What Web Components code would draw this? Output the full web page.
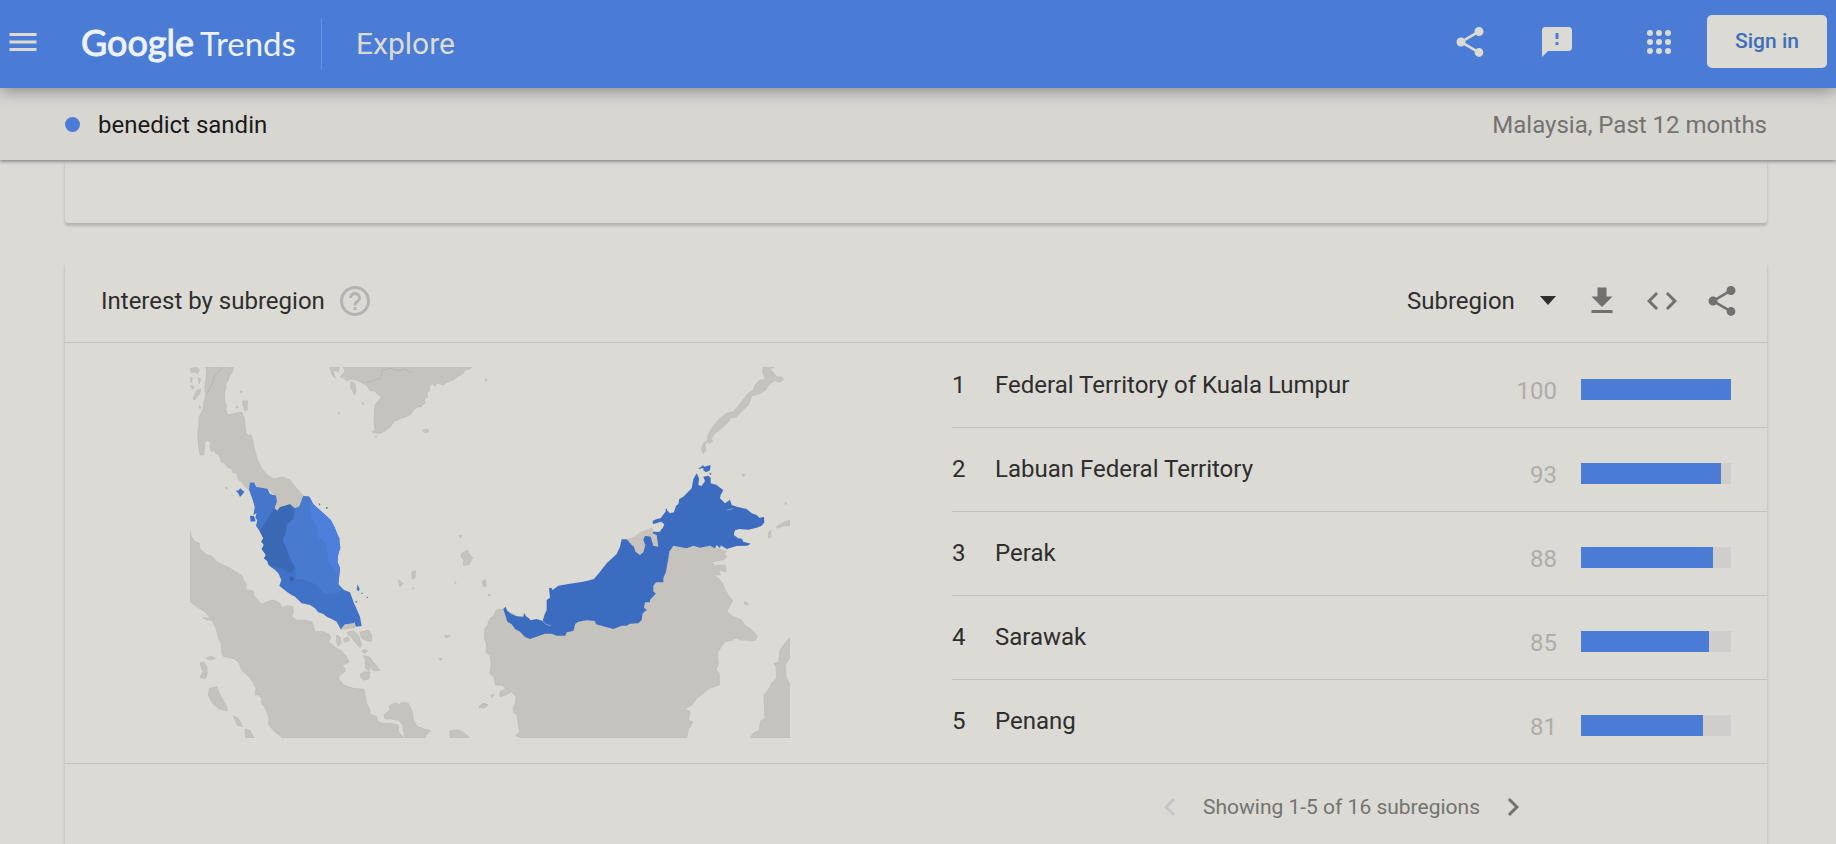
<!DOCTYPE html>
<html lang="en">
<head>
<meta charset="utf-8">
<title>benedict sandin - Explore - Google Trends</title>
<meta name="viewport" content="width=device-width, initial-scale=1">
<style>
  :root {
    --blue: #4a7cd5;
    --page: #dbdad5;
    --bar: #d7d6d1;
    --line: #c0bfbb;
    --text: #2e2e2d;
    --muted: #747370;
    --faint: #aeada9;
  }
  html, body { margin: 0; height: 100%; }
  body { background: var(--page); color: var(--text); font: 24px/36px Roboto, "Liberation Sans", sans-serif; }
</style>
</head>
<body>
<trends-app></trends-app>

<script>
const define = (name, html, setup) => {
  const template = document.createElement('template');
  template.innerHTML = html;
  customElements.define(name, class extends HTMLElement {
    connectedCallback() {
      if (this.shadowRoot) return;
      this.attachShadow({ mode: 'open' }).append(template.content.cloneNode(true));
      if (setup) setup(this, this.shadowRoot);
    }
  });
};

const ICONS = {
  menu: '<path d="M3 18h18v-2H3v2zm0-5h18v-2H3v2zm0-7v2h18V6H3z"/>',
  share: '<path d="M18 16.08c-.76 0-1.44.3-1.96.77L8.91 12.7c.05-.23.09-.46.09-.7s-.04-.47-.09-.7l7.05-4.11c.54.5 1.25.81 2.04.81 1.66 0 3-1.34 3-3s-1.34-3-3-3-3 1.34-3 3c0 .24.04.47.09.7L8.04 9.81C7.5 9.31 6.79 9 6 9c-1.66 0-3 1.34-3 3s1.34 3 3 3c.79 0 1.5-.31 2.04-.81l7.12 4.16c-.05.21-.08.43-.08.65 0 1.61 1.31 2.92 2.92 2.92s2.92-1.31 2.92-2.92-1.31-2.92-2.92-2.92z"/>',
  feedback: '<path d="M20 2H4c-1.1 0-1.99.9-1.99 2L2 22l4-4h14c1.100 0 2-.9 2-2V4c0-1.100-.9-2-2-2zm-7 12h-2v-2h2v2zm0-4h-2V6h2v4z"/>',
  apps: '<g><circle cx="6" cy="6" r="2"/><circle cx="12" cy="6" r="2"/><circle cx="18" cy="6" r="2"/><circle cx="6" cy="12" r="2"/><circle cx="12" cy="12" r="2"/><circle cx="18" cy="12" r="2"/><circle cx="6" cy="18" r="2"/><circle cx="12" cy="18" r="2"/><circle cx="18" cy="18" r="2"/></g>',
  help: '<path d="M11 18h2v-2h-2v2zm1-16C6.480 2 2 6.480 2 12s4.480 10 10 10 10-4.480 10-10S17.520 2 12 2zm0 18c-4.410 0-8-3.590-8-8s3.590-8 8-8 8 3.590 8 8-3.590 8-8 8zm0-14c-2.210 0-4 1.790-4 4h2c0-1.100.9-2 2-2s2 .9 2 2c0 2-3 1.750-3 5h2c0-2.250 3-2.500 3-5 0-2.210-1.790-4-4-4z"/>',
  download: '<path d="M19 9h-4V3H9v6H5l7 7 7-7zM5 18v2h14v-2H5z"/>',
  code: '<path d="M9.400 16.600L4.800 12l4.600-4.600L8 6l-6 6 6 6 1.400-1.400zm5.200 0l4.600-4.600-4.600-4.600L16 6l6 6-6 6-1.400-1.400z"/>',
  prev: '<path d="M15.410 7.410L14 6l-6 6 6 6 1.410-1.410L10.830 12z"/>',
  next: '<path d="M10 6L8.590 7.410 13.170 12l-4.580 4.590L10 18l6-6z"/>'
};

define('trends-icon', `
  <style>
    :host { display: block; width: 36px; height: 36px; flex: none; }
    svg { display: block; width: 100%; height: 100%; fill: currentColor; }
  </style>
  <svg viewBox="0 0 24 24" aria-hidden="true"></svg>`,
  (host, root) => { root.querySelector('svg').innerHTML = ICONS[host.getAttribute('name')]; });

define('icon-button', `
  <style>
    :host { display: block; flex: none; }
    button { display: block; padding: 0; border: 0; background: none; color: inherit; cursor: pointer; }
    button:disabled { cursor: default; }
  </style>
  <button type="button"></button>`,
  (host, root) => {
    const button = root.querySelector('button');
    button.setAttribute('aria-label', host.getAttribute('label'));
    button.disabled = host.hasAttribute('disabled');
    const icon = document.createElement('trends-icon');
    icon.setAttribute('name', host.getAttribute('icon'));
    button.replaceChildren(icon);
  });

define('trends-header', `
  <style>
    :host { display: flex; align-items: center; height: 88px; box-sizing: border-box; padding: 0 9px 4px 5px;
      background: var(--blue); color: var(--page); position: relative; z-index: 3;
      box-shadow: 0 2px 16px rgba(0,0,0,.4); }
    .logo { display: flex; align-items: baseline; gap: 6px; width: 216px; margin-left: 40px; color: #edf1f8;
      font: 33px/48px Lato, "Liberation Sans", sans-serif; text-decoration: none; white-space: nowrap; }
    .logo b { font-size: 36px; font-weight: 400; -webkit-text-stroke: 1px; }
    .rule { width: 1px; height: 50px; margin: 4px 34px 0 24px; background: #6391e3; }
    h1 { margin: 4px 0 0; font-size: 30px; line-height: 40px; font-weight: 400; }
    .space { flex: 1; }
    nav { display: flex; align-items: center; }
    .feedback { margin-left: 51px; }
    .apps { margin: 0 30px 0 66px; }
    .signin { width: 120px; height: 53px; box-sizing: border-box; margin-top: -2px; display: grid; place-items: center;
      background: var(--page); color: #3f6fb8; border-radius: 5px; font-size: 21px; font-weight: 500; text-decoration: none; }
  </style>
  <icon-button icon="menu" label="Main menu"></icon-button>
  <a class="logo" href="#home"><b>Google</b><span>Trends</span></a>
  <div class="rule"></div>
  <h1>Explore</h1>
  <div class="space"></div>
  <nav>
    <icon-button icon="share" label="Share"></icon-button>
    <icon-button class="feedback" icon="feedback" label="Send feedback"></icon-button>
    <icon-button class="apps" icon="apps" label="Google apps"></icon-button>
    <a class="signin" href="#signin">Sign in</a>
  </nav>`);

define('query-bar', `
  <style>
    :host { display: flex; align-items: center; height: 72px; padding: 0 69px 0 65px; background: var(--bar);
      position: relative; z-index: 2; box-shadow: 0 1px 4px rgba(0,0,0,.5); }
    .dot { width: 15px; height: 15px; border-radius: 50%; background: var(--blue); margin-right: 18px; }
    .term, .scope { padding-top: 2px; }
    .term { flex: 1; color: #1a1a1a; }
    .scope { color: var(--muted); }
  </style>
  <span class="dot"></span><span class="term">benedict sandin</span>
  <span class="scope">Malaysia, Past 12 months</span>`);

define('trends-card', `
  <style>
    :host { display: block; border-radius: 3px; background: var(--page);
      box-shadow: 0 3px 3px rgba(0,0,0,.13), 0 2px 3px rgba(0,0,0,.06); }
  </style>
  <slot></slot>`);

define('region-map', `
  <style>
    :host { display: block; width: 600px; max-width: 100%; }
    svg { display: block; width: 100%; height: auto; }
    .land { fill: #c6c3be; stroke: #bdbab5; stroke-width: 2; }
    .edge { fill: none; stroke: #b9b6b1; stroke-width: 3; }
  </style>
  <svg viewBox="190 367 600 371" role="img" aria-label="Interest by subregion map of Malaysia">
    <g transform="translate(180 355) scale(.33333)" stroke-linejoin="round">
      <g class="land">
        <path d="M75 36H160L158 50 148 64 145 76 137 88 139 96 134 110 133 140 140 152 137 165 143 180 153 178 165 175 185 172 193 190 196 220 198 235 206 242 212 238 218 256 222 275 228 300 232 315 245 340 262 360 275 368 285 372 305 366 318 369 330 375 340 388 350 400 370 423 358 455 345 460 330 448 305 458 290 470 280 460 290 440 285 420 265 402 240 400 222 383 210 385 208 405 195 395 184 380 176 375 170 355 158 352 155 340 144 338 135 325 124 320 117 300 105 294 105 284 95 290 90 278 92 262 80 255 74 266 72 300 60 300 55 270 53 235 57 212 57 188 70 160 72 140 78 120 74 96 78 78 80 45Z"/>
        <path d="M30 40l20-2 8 6-6 14-8-8-10 3zM30 68l7 1-3 14zM54 68l8 4-4 14zM32 92l10 3-4 8zM48 108l14-6-3 14-14 18-6-2zM58 152l5 4-3 6zM190 137l13 1-2 18 3 6-10 6-3-14-4-4zM181 107l6 2-4 5zM170 152l4 6-4 2zM136 396l7 3-5 4z"/>
        <path d="M448 36H478L475 50 468 46 460 50 466 70 456 60 452 46Z"/>
        <path d="M490 36H875L868 42 856 44 850 55 834 64 820 75 800 82 790 90 768 84 768 94 758 88 750 90 748 108 740 115 743 126 733 132 735 144 722 156 710 156 700 166 690 180 664 190 640 200 634 212 625 220 612 230 600 235 576 232 585 226 582 204 585 150 605 125 590 115 583 107 570 107 560 90 545 84 530 75 512 72 500 78 492 70 480 66 495 50Z"/>
        <path d="M512 80l13 6 3 20-5 14-6-14-5-8zM728 226l14-4 4 8-10 3zM916 71l6 4-4 5zM585 244l6 1-4 3zM476 172l4 3-4 2zM547 142l5 4-4 3z"/>
        <path d="M30 530L34 544 42 557 58 565 60 582 80 600 95 603 110 620 130 630 148 638 165 650 185 662 188 672 197 685 198 704 220 708 220 720 232 735 246 748 262 740 280 735 300 745 306 758 315 755 322 752 338 755 340 770 335 785 352 797 375 795 395 800 400 812 405 830 430 830 448 838 452 850 445 860 458 870 470 880 485 888 500 905 507 922 485 932 495 940 495 950 480 960 475 970 490 990 520 1000 552 1003 556 1025 560 1045 570 1065 570 1078 590 1085 592 1098 610 1106 630 1105 655 1110 655 1130 672 1150H310L290 1135 275 1120 265 1108 268 1090 262 1078 258 1062 245 1045 245 1030 238 1020 225 1020 228 1000 220 985 210 968 185 945 178 925 165 912 130 904 125 890 125 870 115 848 110 825 98 800 84 780 75 770 50 755 30 740Z"/>
        <path d="M612 1080L630 1065 628 1052 645 1044 658 1048 665 1042 685 1045 697 1070 700 1095 712 1115 752 1128 740 1138 735 1150H675L668 1110 656 1096 636 1092 615 1092ZM810 1127L835 1124 860 1140 868 1150H810ZM88 1000L110 995 120 1020 140 1055 142 1068 118 1062 98 1046 85 1020ZM160 1083l14 6 14 26-16-4zM195 1122l15 4 12 24h-25zM78 910l14-6 14 5-12 6zM60 925l12-4 8 14 2 18-5 18-17-3 9-18zM70 788l20 2 12-2-2 8-20-2z"/>
        <path d="M482 823L500 807 525 808 525 818ZM500 832L520 828 535 840 545 870 540 878 526 862 512 845ZM540 832L565 825 575 840 575 858 560 858 545 850ZM470 840l10 6 3 18-8 10-6-15zM490 852l14-6 6 10-16 6zM545 888l10-6 8 6-10 8zM550 902l18 4 32 40-18 2-20-20zM540 958l14-8 16 2-4 20-14 4-10-10zM555 920l14 12-2 18-10-10z"/>
        <path d="M845 595L862 585 868 598 878 608 868 628 850 632 852 615 843 606ZM655 675l15 10-10 10zM696 650l11-3-2 22-9 3zM906 680l8-6 3 16-7 4zM825 680l4 3-4 3zM698 698l5 2-4 3zM793 840l18 3-13 5zM778 910l8 2-6 4zM897 1057l12-12 14 3-12 10zM838 540l8 2-6 8zM925 798l20 6v90l-22-10-8-35 8-20z"/>
      </g>
      <path class="edge" d="M130 36L115 52 104 60 98 84 80 118M558 84L580 76 602 70 606 46 630 40 650 46 675 42 690 52 698 50"/>
      <path fill="#4072c8" d="M210 383L222 383 228 395 240 400 262 402 270 418 288 422 290 440 283 460 292 468 300 457 330 448 345 460 358 455 370 423 388 425 400 448 430 475 452 495 465 520 470 540 478 550 476 568 481 578 475 595 472 620 480 640 475 688 492 705 510 712 522 745 527 755 540 785 545 813 528 815 522 799 522 805 495 808 482 823 470 800 455 792 440 785 430 777 415 772 405 760 390 750 365 745 345 725 335 720 320 710 298 692 304 675 295 655 285 645 265 630 262 618 252 610 258 600 245 582 252 570 244 560 250 550 240 530 228 512 232 496 226 488 230 474 220 480 225 460 218 430 208 405Z"/>
      <path fill="#4477cc" d="M210 383L222 383 228 395 262 402 270 418 288 422 290 440 283 460 270 485 262 505 244 520 232 500 230 474 222 470 225 455 208 405Z"/>
      <path fill="#3a68b5" d="M300 457L330 448 342 470 338 495 320 510 318 535 308 555 320 580 330 610 345 635 332 655 305 640 275 636 262 618 252 610 258 600 245 582 252 570 244 560 250 550 240 530 250 510 270 480 283 460 292 468Z"/>
      <path fill="#487ad0" d="M370 423L388 425 400 448 430 475 452 495 465 520 470 540 478 550 476 568 481 578 475 595 472 620 480 640 475 688 488 705 465 718 430 715 410 690 378 674 348 672 345 635 330 610 320 580 308 555 318 535 320 510 342 490 345 460 358 455Z"/>
      <path fill="#4d80dc" d="M388 440L400 448 430 475 452 495 465 520 478 550 481 578 475 595 472 620 480 640 475 660 445 620 440 565 412 545 408 510 395 490Z"/>
      <path fill="#355fa5" d="M330 665l9 0 3 10-9 5-4-7z"/>
      <path fill="#3e71c9" d="M168 407l8-1 5-6 6 6 6 4-5 8-8 8-4-9zM210 482l12 1 5 16-15 1zM530 704l3-16 6 14-3 7zM544 713h4v4h-4zM525 740l8-3-4 7z"/>
      <path fill="#6a7ba6" d="M416 444l6 4-5 4zM438 456h5v5h-5zM560 725h4v4h-4z"/>
    </g>
    <g transform="translate(470 355) scale(.33333)" stroke-linejoin="round">
      <g class="land">
        <path d="M100 762L78 765 72 782 60 790 55 808 45 820 43 850 50 862 48 892 60 902 64 925 60 955 72 966 76 990 95 990 108 1000 90 1010 90 1025 108 1020 125 1010 138 1025 136 1045 130 1060 130 1072 142 1082 145 1110 150 1130 137 1142 156 1150H650L655 1120 662 1115 668 1100 655 1095 660 1070 645 1062 665 1050 680 1030 700 1015 718 1000 748 990 748 955 738 945 745 925 742 895 752 878 765 860 790 855 790 848 815 855 855 857 862 843 840 820 825 812 815 795 790 785 770 770 778 755 788 738 775 720 765 705 758 685 745 670 730 660 752 660 745 645 768 650 765 630 735 632 725 620 760 615 770 605 762 595 770 590 740 580 700 570 600 570 585 630 500 770 350 780 200 815Z"/>
        <path d="M880 36H915L900 42 912 55 922 66 935 66 940 74 928 82 914 76 895 90 888 104 870 116 845 122 840 138 835 150 820 164 800 185 780 190 775 200 755 220 735 235 726 248 718 246 728 258 718 266 712 260 704 270 708 285 700 296 694 284 700 265 712 258 712 245 725 220 745 195 770 175 790 170 815 140 835 115 850 106 855 90 868 76 886 74 878 50Z"/>
        <path d="M962 845V905L945 930 948 965 962 995V1150H840L850 1134 868 1126 872 1098 885 1090 882 1020 895 1005 905 985 920 970 918 935 912 925 926 922 930 885 945 865ZM920 515L945 500 962 495V512L940 512 922 520ZM895 535l6-8 3 18-8 4zM815 357l10 2-5 6zM822 740l10 2 2 8-10-2zM38 682l8-6 3 16-8 4zM54 718l10 1-8 4zM28 1055l14-8 12 3-14 10zM62 1022l10-4-6 10zM945 443l6 2-5 4z"/>
      </g>
      <path fill="#3c6cbf" d="M100 762L107 755 112 768 125 778 140 784 160 785 162 773 168 784 175 788 182 796 200 792 218 798 224 778 230 765 230 735 240 728 237 700 244 698 248 705 265 692 300 686 330 682 350 678 372 672 390 650 410 625 440 597 450 575 455 553 470 553 490 560 550 530 570 530 580 510 550 520 548 498 560 492 572 490 590 465 600 475 612 472 618 452 625 448 628 432 640 425 665 400 670 372 680 355 687 370 685 390 695 393 705 378 700 365 715 362 722 368 722 385 740 390 750 398 760 405 752 420 750 430 765 445 780 434 785 450 800 455 830 462 845 475 860 480 868 488 882 486 883 502 875 512 860 518 835 524 808 522 795 526 792 540 815 550 820 560 842 566 832 572 800 573 770 582 752 572 750 580 740 570 735 580 720 572 690 578 670 572 650 580 610 572 598 590 595 610 588 650 580 670 580 682 558 682 550 692 550 710 558 715 540 735 540 742 525 742 522 758 530 765 518 775 515 795 505 805 480 806 470 812 455 812 430 822 405 815 378 808 375 798 350 796 325 800 316 806 310 828 290 832 286 842 260 842 245 836 225 836 180 852 165 846 150 830 135 822 125 808 112 800Z"/>
      <path fill="#3c6cbf" d="M700 336L722 330 720 346 708 352 700 346ZM684 342l16-12 2 8-16 4zM718 354l8 2-6 4zM587 461l4 0v6h-4z"/>
      <path fill="#c8c3be" d="M470 552L492 545 510 532 545 518 552 526 548 535 560 540 565 575 550 572 542 545 525 542 520 555 526 570 520 592 510 600 496 590 492 575 485 570Z"/>
      <path fill="none" stroke="#b4bdcb" stroke-width="2" d="M218 798L228 808 242 812M752 572L775 585M772 465l16-4"/>
      <path fill="#dbdad5" d="M548 508l25-8 10 8-5 12-15 10-14-6zM794 530l20 0-4 14 18 8-24-2-12-10z"/>
    </g>
  </svg>`);

define('region-row', `
  <style>
    :host { display: grid; grid-template-columns: 43px 1fr auto 150px; align-items: center; height: 84px;
      box-sizing: border-box; padding: 0 36px 2px 0; border-top: 1px solid var(--line); }
    .value { color: var(--faint); margin: 12px 24px 0 0; }
    .track { height: 21px; margin-top: 10px; background: #cfceca; }
    .fill { height: 100%; background: var(--blue); }
  </style>
  <span class="rank"></span><span><slot></slot></span>
  <span class="value"></span><div class="track"><div class="fill"></div></div>`,
  (host, root) => {
    root.querySelector('.rank').textContent = host.getAttribute('rank');
    root.querySelector('.value').textContent = host.getAttribute('value');
    root.querySelector('.fill').style.width = host.getAttribute('value') + '%';
    host.setAttribute('role', 'listitem');
  });

define('list-pager', `
  <style>
    :host { display: flex; align-items: center; justify-content: center; gap: 15px; height: 86px;
      color: var(--muted); font-size: 21px; }
    .off { color: #c6c5c1; }
  </style>
  <icon-button class="off" icon="prev" label="Previous" disabled></icon-button>
  <span><slot></slot></span>
  <icon-button icon="next" label="Next"></icon-button>`);

define('subregion-panel', `
  <style>
    :host { display: block; }
    header { display: flex; align-items: center; height: 81px; box-sizing: border-box; padding: 0 27px 3px 36px;
      border-bottom: 1px solid var(--line); }
    h2 { margin: 0 12px 0 0; font: inherit; }
    .help { color: #b4b3af; flex: 1; }
    .pick { display: grid; align-items: center; margin-right: 28px; }
    .pick > * { grid-area: 1 / 1; }
    select { appearance: none; width: 149px; height: 36px; padding: 0; border: 0; background: none; color: var(--text);
      font: inherit; cursor: pointer; }
    .caret { justify-self: end; border: 8px solid transparent; border-top: 9px solid var(--text); border-bottom: 0; pointer-events: none; }
    .tools { display: flex; gap: 24px; color: #72716e; }
    .body { display: grid; grid-template-columns: 1fr 1fr; }
    .map { display: flex; justify-content: center; padding: 24px 1px 0 0; }
    .list { padding-left: 36px; }
    region-row:first-child { border-top-color: transparent; }
    footer { display: grid; grid-template-columns: 1fr 1fr; border-top: 1px solid var(--line); }
    list-pager { grid-column: 2; }
  </style>
  <header>
    <h2>Interest by subregion</h2>
    <icon-button class="help" icon="help" label="Help"></icon-button>
    <label class="pick"><select aria-label="Resolution"><option>Subregion</option><option>City</option></select><span class="caret"></span></label>
    <div class="tools">
      <icon-button icon="download" label="Download"></icon-button>
      <icon-button icon="code" label="Embed"></icon-button>
      <icon-button icon="share" label="Share"></icon-button>
    </div>
  </header>
  <div class="body">
    <div class="map"><region-map></region-map></div>
    <div class="list" role="list">
      <region-row rank="1" value="100">Federal Territory of Kuala Lumpur</region-row>
      <region-row rank="2" value="93">Labuan Federal Territory</region-row>
      <region-row rank="3" value="88">Perak</region-row>
      <region-row rank="4" value="85">Sarawak</region-row>
      <region-row rank="5" value="81">Penang</region-row>
    </div>
  </div>
  <footer><list-pager>Showing 1-5 of 16 subregions</list-pager></footer>`);

define('trends-app', `
  <style>
    :host { display: flex; flex-direction: column; height: 100vh; }
    main { flex: 1; min-height: 0; overflow-y: auto; scrollbar-width: none; padding: 0 69px 0 65px; }
    .previous { height: 63px; margin-bottom: 39px; }
  </style>
  <trends-header></trends-header>
  <query-bar></query-bar>
  <main>
    <trends-card class="previous"></trends-card>
    <trends-card><subregion-panel></subregion-panel></trends-card>
  </main>`);
</script>
</body>
</html>
